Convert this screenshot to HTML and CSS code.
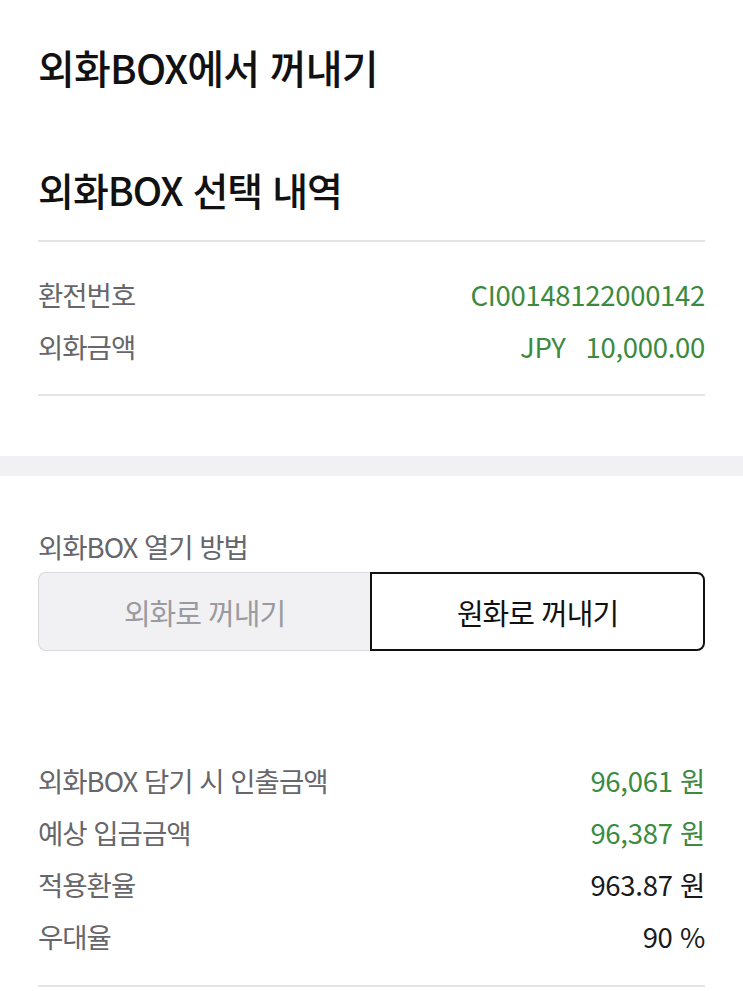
FILE: index.html
```html
<!DOCTYPE html>
<html lang="ko">
<head>
<meta charset="utf-8">
<link rel="stylesheet" href="styles.css">
</head>
<body>
<div class="page">
  <section class="top">
    <h1 class="title">외화BOX에서 꺼내기</h1>
    <h2 class="subtitle">외화BOX 선택 내역</h2>
    <div class="list list-first">
      <div class="row"><span class="label">환전번호</span><span class="value green">CI00148122000142</span></div>
      <div class="row"><span class="label">외화금액</span><span class="value green"><span class="cur">JPY</span>10,000.00</span></div>
    </div>
  </section>
  <div class="band"></div>
  <section class="bottom">
    <div class="field-label">외화BOX 열기 방법</div>
    <div class="segment">
      <div class="seg seg-off">외화로 꺼내기</div>
      <div class="seg seg-on">원화로 꺼내기</div>
    </div>
    <div class="list list-second">
      <div class="row"><span class="label">외화BOX 담기 시 인출금액</span><span class="value green">96,061 원</span></div>
      <div class="row"><span class="label">예상 입금금액</span><span class="value green">96,387 원</span></div>
      <div class="row"><span class="label">적용환율</span><span class="value">963.87 원</span></div>
      <div class="row"><span class="label">우대율</span><span class="value">90 %</span></div>
    </div>
  </section>
</div>
</body>
</html>
```

FILE: styles.css
```css
html, body {
  margin: 0;
  padding: 0;
  background: #ffffff;
}
body {
  font-family: "Noto Sans CJK KR", "Noto Sans", sans-serif;
  color: #1a1a1a;
}
.page {
  width: 743px;
}
.top, .bottom {
  padding: 0 38px;
}
.title {
  margin: 0;
  padding-top: 42px;
  font-size: 40px;
  line-height: 50px;
  font-weight: 500;
  letter-spacing: -0.8px;
  color: #111;
}
.subtitle {
  margin: 0;
  padding-top: 72px;
  font-size: 39px;
  line-height: 50px;
  font-weight: 500;
  letter-spacing: -1px;
  color: #111;
  padding-bottom: 26px;
}
.list {
  border-bottom: 2px solid #e4e4e6;
}
.list-first {
  border-top: 2px solid #e4e4e6;
  padding: 26px 0 22px;
}
.row {
  display: flex;
  justify-content: space-between;
  align-items: center;
  height: 52px;
  font-size: 27.5px;
}
.label {
  color: #66666b;
  letter-spacing: -1px;
}
.value {
  color: #1a1a1a;
  letter-spacing: -0.3px;
}
.green {
  color: #3b8a3e;
}
.cur {
  margin-right: 20px;
}
.band {
  margin-top: 60px;
  height: 20px;
  background: #f1f1f4;
}
.field-label {
  margin-top: 52px;
  font-size: 27.5px;
  line-height: 36px;
  letter-spacing: -1px;
  color: #66666b;
}
.segment {
  margin-top: 8px;
  display: flex;
  height: 79px;
}
.seg {
  flex: 1;
  display: flex;
  align-items: center;
  justify-content: center;
  font-size: 29px;
  letter-spacing: -1px;
  box-sizing: border-box;
}
.seg-off {
  background: #f1f1f4;
  border: 1.5px solid #d9d9de;
  border-right: none;
  border-radius: 8px 0 0 8px;
  color: #9a9aa0;
}
.seg-on {
  background: #fff;
  border: 2px solid #111;
  border-radius: 0 8px 8px 0;
  color: #111;
}
.list-second {
  padding: 103px 0 23px;
}
```
